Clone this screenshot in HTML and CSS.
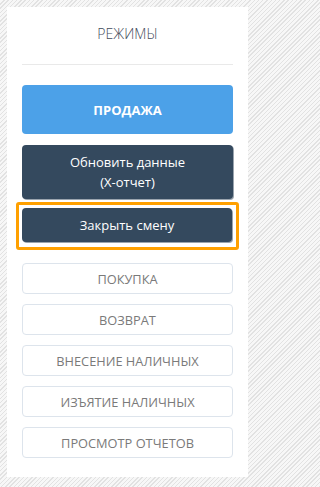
FILE: index.html
```html
<!DOCTYPE html>
<html lang="ru">
<head>
<meta charset="utf-8">
<link rel="stylesheet" href="styles.css">
</head>
<body>
<div class="panel">
  <div class="panel-title">РЕЖИМЫ</div>
  <div class="actions">
    <button class="btn btn-primary">ПРОДАЖА</button>
    <button class="btn btn-dark btn-tall">Обновить данные<br>(X-отчет)</button>
    <div class="focus-frame">
      <button class="btn btn-dark btn-close">Закрыть смену</button>
    </div>
    <div class="modes">
      <button class="btn btn-outline">ПОКУПКА</button>
      <button class="btn btn-outline">ВОЗВРАТ</button>
      <button class="btn btn-outline">ВНЕСЕНИЕ НАЛИЧНЫХ</button>
      <button class="btn btn-outline">ИЗЪЯТИЕ НАЛИЧНЫХ</button>
      <button class="btn btn-outline">ПРОСМОТР ОТЧЕТОВ</button>
    </div>
  </div>
</div>
</body>
</html>
```

FILE: styles.css
```css
html {
  min-height: 100%;
  background-color: #f1f1f1;
  background-image: repeating-linear-gradient(-45deg, #e2e2e2 0 1px, #f7f7f7 1px 3px);
}
body {
  margin: 0;
  width: 255px;
  height: 487px;
  padding: 7px;
  box-sizing: border-box;
  font-family: "Open Sans", "Noto Sans", sans-serif;
}
.panel {
  width: 241px;
  height: 470px;
  box-sizing: border-box;
  background: #ffffff;
  padding: 0 15px 20px;
}
.panel-title {
  padding: 18px 0 21px;
  line-height: 18px;
  font-size: 14px;
  font-weight: 300;
  color: #434b5a;
  text-align: center;
  border-bottom: 1px solid #e9e9e9;
}
.actions {
  display: flex;
  flex-direction: column;
  padding-top: 20px;
}
.btn {
  display: block;
  width: 100%;
  margin: 0;
  border: 0;
  padding: 0;
  font-family: inherit;
  text-align: center;
  border-radius: 4px;
}
.btn-primary {
  height: 49px;
  background: #4ca1e8;
  color: #ffffff;
  font-size: 13px;
  font-weight: 700;
}
.btn-dark {
  background: #34495e;
  color: #ffffff;
  font-size: 13px;
  line-height: 20px;
  box-shadow: 1px 1px 0 #9aa4ae;
}
.btn-tall {
  margin-top: 11px;
  height: 54px;
}
.focus-frame {
  margin: 3px -6px 0;
  padding: 3px 4px 5px 3px;
  border: 3px solid #ffa000;
  border-radius: 3px;
}
.btn-close {
  height: 34px;
}
.modes {
  display: flex;
  flex-direction: column;
  gap: 10px;
  margin-top: 13px;
}
.btn-outline {
  height: 31px;
  background: #ffffff;
  border: 1px solid #dde4ec;
  color: #7a7a7a;
  font-size: 12.8px;
}
```
